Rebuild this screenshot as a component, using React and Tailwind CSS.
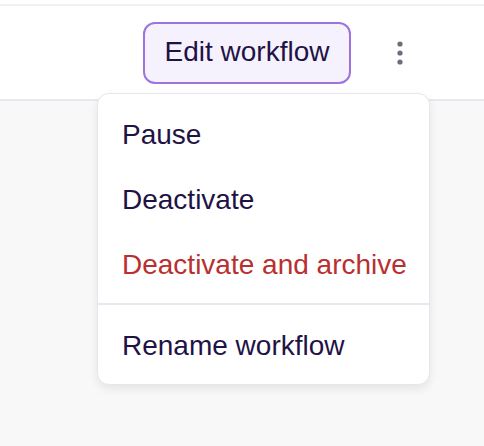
import { useState } from 'react';

const MENU_ITEMS = [
  { label: 'Pause' },
  { label: 'Deactivate' },
  { label: 'Deactivate and archive', danger: true },
];

function KebabIcon() {
  return (
    <svg width="6" height="26" viewBox="0 0 6 26" fill="#6e6b7b">
      <circle cx="3" cy="3" r="2.6" />
      <circle cx="3" cy="12" r="2.6" />
      <circle cx="3" cy="21" r="2.6" />
    </svg>
  );
}

function MenuItem({ label, danger }) {
  return (
    <button
      type="button"
      className={`block w-full text-left pl-6 h-[65px] text-[28px] leading-none ${
        danger ? 'text-[#b8302f]' : 'text-[#1f1346]'
      }`}
    >
      {label}
    </button>
  );
}

export default function App() {
  const [open] = useState(true);

  return (
    <div
      className="w-[484px] h-[446px] bg-[#f8f8f9] overflow-hidden"
      style={{ fontFamily: '"Liberation Sans", Arial, sans-serif' }}
    >
      {/* Header bar */}
      <div className="bg-white pt-1">
        <div className="h-[2px] bg-[#f1f1f2]" />
        <div className="h-[95px] flex items-center justify-end pr-[81px] gap-[46px] border-b-2 border-[#e9e8f0]">
          <button
            type="button"
            className="h-[62px] w-[208px] rounded-[12px] border-2 border-[#9b74e0] bg-[#f5f2fe] text-[28px] leading-none text-[#1f1346] mt-[1px] pb-[2px]"
          >
            Edit workflow
          </button>
          <div className="mt-[3px]">
            <KebabIcon />
          </div>
        </div>
      </div>

      {/* Actions dropdown */}
      {open && (
        <div className="relative">
          <div className="absolute left-[97px] top-[-8px] w-[333px] bg-white rounded-[12px] border border-[#e7e6ee] shadow-[0_4px_10px_rgba(0,0,0,0.08)] overflow-hidden">
            <div className="pt-[8px] pb-[6px]">
              {MENU_ITEMS.map((item) => (
                <MenuItem key={item.label} {...item} />
              ))}
            </div>
            <div className="h-[2px] bg-[#e9e8f0]" />
            <div className="pt-[8px] pb-[6px]">
              <MenuItem label="Rename workflow" />
            </div>
          </div>
        </div>
      )}
    </div>
  );
}
